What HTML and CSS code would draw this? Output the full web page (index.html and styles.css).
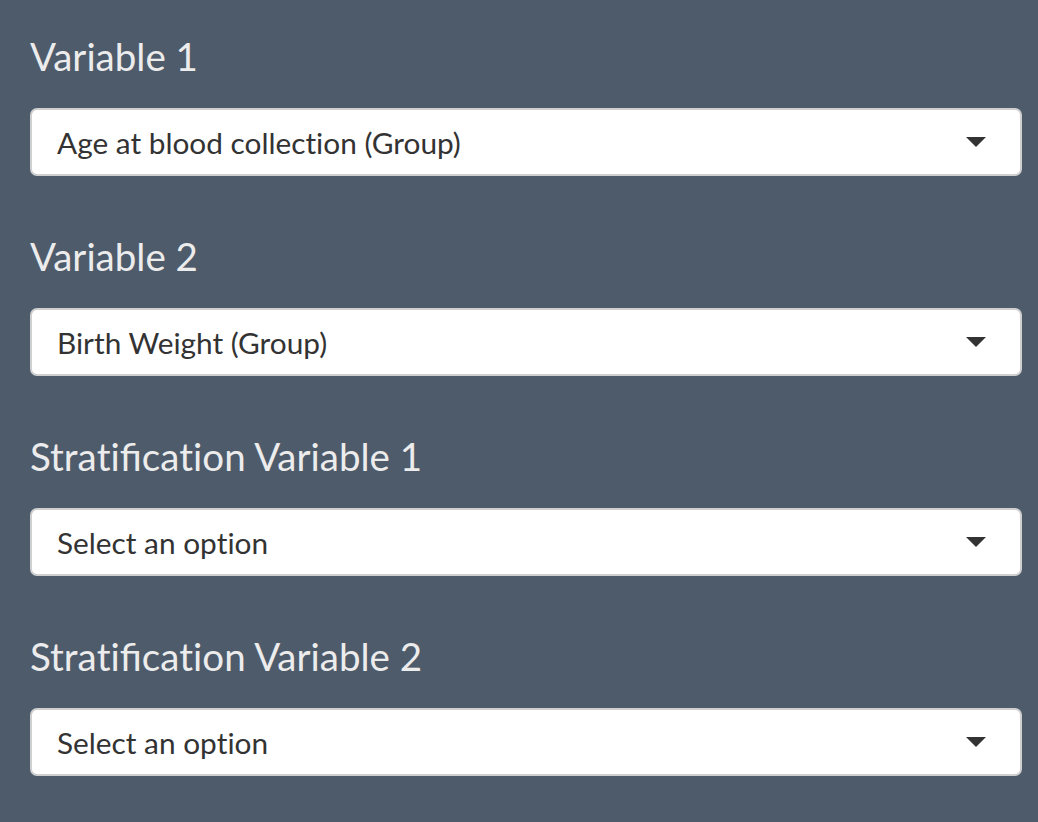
FILE: index.html
```html
<!DOCTYPE html>
<html>
<head>
<meta charset="utf-8">
<link rel="stylesheet" href="styles.css">
</head>
<body>
<div class="form">
  <div class="field">
    <label class="label">Variable 1</label>
    <div class="select"><span class="value">Age at blood collec<span class="nl">t</span>ion (Group)</span><span class="caret"></span></div>
  </div>
  <div class="field">
    <label class="label">Variable 2</label>
    <div class="select"><span class="value">Birth Weight (Group)</span><span class="caret"></span></div>
  </div>
  <div class="field">
    <label class="label">Stra<span class="nl">t</span>ifica<span class="nl">t</span>ion Variable 1</label>
    <div class="select"><span class="value">Select an op<span class="nl">t</span>ion</span><span class="caret"></span></div>
  </div>
  <div class="field">
    <label class="label">Stra<span class="nl">t</span>ifica<span class="nl">t</span>ion Variable 2</label>
    <div class="select"><span class="value">Select an op<span class="nl">t</span>ion</span><span class="caret"></span></div>
  </div>
</div>
</body>
</html>
```
FILE: styles.css
```css
html, body {
  margin: 0;
  padding: 0;
  background: #4e5b6b;
  font-family: Lato, "Liberation Sans", sans-serif;
}
.form {
  padding: 32px 16px 0 30px;
  display: flex;
  flex-direction: column;
  gap: 56px;
}
.field {
  display: flex;
  flex-direction: column;
  gap: 28px;
}
.label {
  color: #ececec;
  font-size: 38.5px;
  line-height: 48px;
  height: 48px;
}
.nl {
  font-feature-settings: "liga" 0;
}
.select {
  box-sizing: border-box;
  height: 68px;
  background: #fff;
  border: 2px solid #cfcfcf;
  border-radius: 7px;
  display: flex;
  align-items: center;
  justify-content: space-between;
  padding: 0 34px 0 25px;
}
.value {
  color: #333;
  font-size: 29.8px;
}
.caret {
  width: 0;
  height: 0;
  border-left: 10px solid transparent;
  border-right: 10px solid transparent;
  border-top: 10px solid #333;
}
```
